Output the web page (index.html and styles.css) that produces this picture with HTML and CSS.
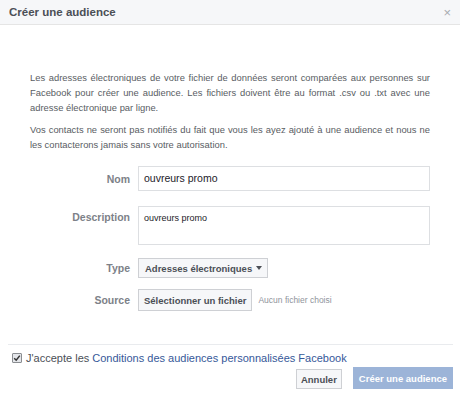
FILE: index.html
```html
<!DOCTYPE html>
<html lang="fr">
<head>
<meta charset="utf-8">
<link rel="stylesheet" href="styles.css">
</head>
<body>
<div class="dialog">
  <div class="header">
    <span class="title">Créer une audience</span>
    <span class="close">×</span>
  </div>
  <div class="content">
    <p class="intro">Les adresses électroniques de votre fichier de données seront comparées aux personnes sur Facebook pour créer une audience. Les fichiers doivent être au format .csv ou .txt avec une adresse électronique par ligne.</p>
    <p class="intro">Vos contacts ne seront pas notifiés du fait que vous les ayez ajouté à une audience et nous ne les contacterons jamais sans votre autorisation.</p>
    <div class="form">
      <div class="row row-nom">
        <label class="lbl">Nom</label>
        <div class="input">ouvreurs promo</div>
      </div>
      <div class="row row-desc">
        <label class="lbl">Description</label>
        <div class="textarea">ouvreurs promo</div>
      </div>
      <div class="row row-type">
        <label class="lbl">Type</label>
        <span class="select">Adresses électroniques <span class="caret"></span></span>
      </div>
      <div class="row row-source">
        <label class="lbl">Source</label>
        <span class="filebtn">Sélectionner un fichier</span><span class="nofile">Aucun fichier choisi</span>
      </div>
    </div>
  </div>
  <div class="footer">
    <div class="accept"><span class="check"><svg width="8" height="8" viewBox="0 0 8 8"><path d="M1.2 4.2 L3.2 6.2 L6.8 1.6" fill="none" stroke="#333" stroke-width="1.5"/></svg></span>J'accepte les <span class="link">Conditions des audiences personnalisées Facebook</span></div>
    <div class="actions">
      <span class="btn">Annuler</span>
      <span class="btn primary">Créer une audience</span>
    </div>
  </div>
</div>
</body>
</html>
```
FILE: styles.css
```css
html, body { margin: 0; padding: 0; background: #fff; }
body { font-family: "Liberation Sans", Arial, sans-serif; color: #4b4f56; width: 460px; height: 393px; overflow: hidden; }
.dialog { width: 460px; }
.header { height: 24px; background: #f6f7f9; border-bottom: 1px solid #e5e5e5; display: flex; align-items: center; justify-content: space-between; padding: 0 9px; }
.title { font-weight: bold; font-size: 11.5px; color: #4b4f56; }
.close { font-size: 13px; color: #a8abb1; }
.content { padding: 45px 30px 0 30px; }
.intro { margin: 0 0 7px 0; font-size: 9.4px; line-height: 15px; text-align: justify; color: #595d63; }
.form { margin-top: 14px; display: flex; flex-direction: column; }
.row { display: flex; align-items: center; }
.row-nom { margin-bottom: 15px; }
.row-desc { align-items: flex-start; margin-bottom: 13px; }
.row-type { margin-bottom: 11px; }
.lbl { width: 100px; margin-right: 8px; flex: none; font-size: 10.5px; font-weight: bold; color: #7d8188; text-align: right; }
.row-desc .lbl { padding-top: 5px; }
.input { width: 294px; height: 25px; border: 1px solid #dddfe2; box-sizing: border-box; padding: 0 5px; font-size: 10.5px; line-height: 23px; color: #1d2129; }
.textarea { width: 294px; height: 39px; border: 1px solid #dddfe2; box-sizing: border-box; padding: 6px 5px; font-size: 9px; color: #1d2129; }
.select { display: inline-flex; align-items: center; height: 20px; box-sizing: border-box; border: 1px solid #ced0d4; background: #f6f7f9; padding: 0 5px 0 6px; font-size: 9.5px; font-weight: bold; color: #4b4f56; }
.caret { display: inline-block; width: 0; height: 0; border-left: 3px solid transparent; border-right: 3px solid transparent; border-top: 4px solid #4b4f56; margin-left: 4px; }
.filebtn { display: inline-flex; align-items: center; height: 22px; box-sizing: border-box; border: 1px solid #ced0d4; background: #f6f7f9; padding: 0 5px; font-size: 9.5px; font-weight: bold; color: #4b4f56; }
.nofile { font-size: 8.5px; color: #90949c; margin-left: 6px; }
.footer { margin: 33px 7px 0 8px; border-top: 1px solid #e9ebee; padding-top: 7px; }
.accept { font-size: 11px; color: #4b4f56; display: flex; align-items: center; padding-left: 4px; }
.check { width: 8px; height: 8px; border: 1px solid #8a8d91; background: #e4e6ea; border-radius: 1px; display: inline-flex; align-items: center; justify-content: center; margin-right: 4px; }
.link { color: #365899; margin-left: 3px; }
.actions { display: flex; justify-content: flex-end; gap: 11px; margin-top: 3px; align-items: flex-end; }
.btn { display: inline-flex; align-items: center; height: 20px; box-sizing: border-box; padding: 0 4px; border: 1px solid #ced0d4; background: #f6f7f9; font-size: 9.5px; font-weight: bold; color: #4b4f56; }
.btn.primary { height: 22px; padding: 0 5px; background: #9cb4d8; border-color: #9cb4d8; color: #fff; }
```
